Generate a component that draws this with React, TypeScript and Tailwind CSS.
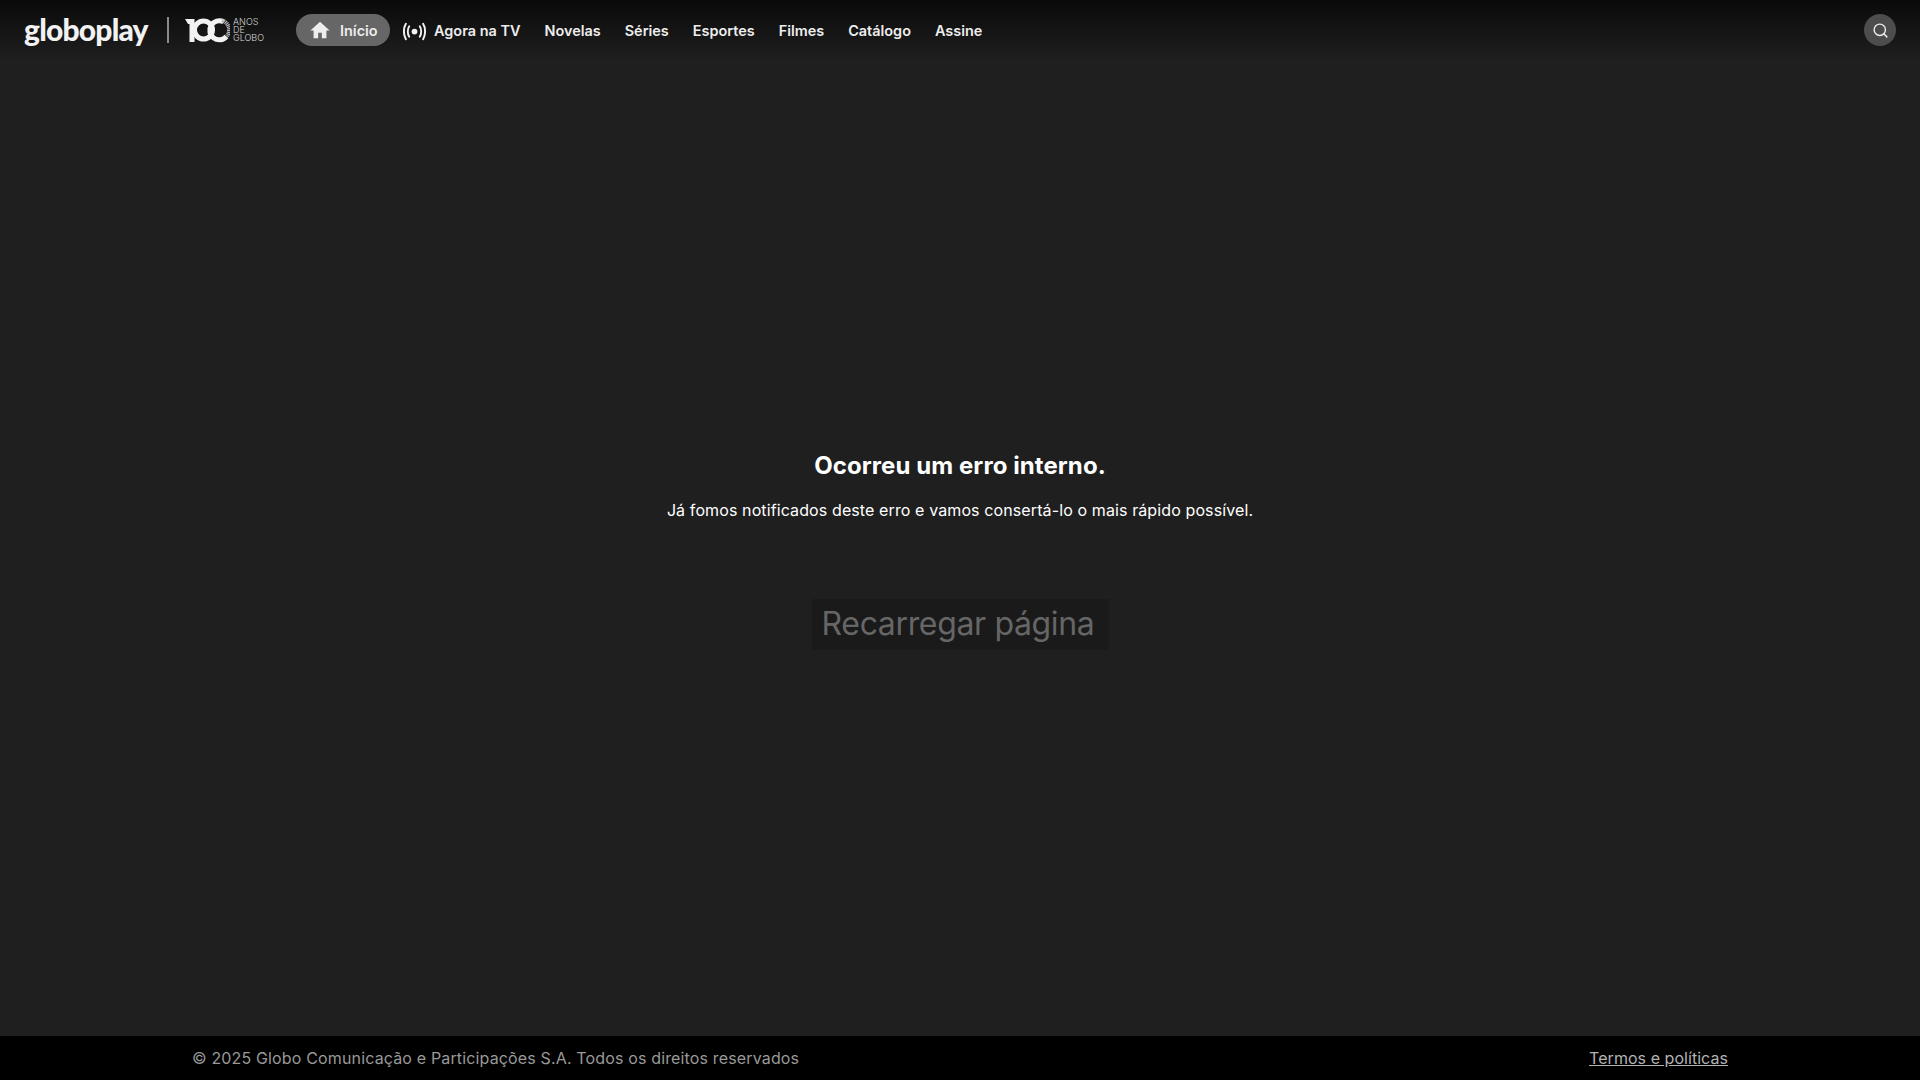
import { Search } from 'lucide-react';

const navItems = ['Novelas', 'Séries', 'Esportes', 'Filmes', 'Catálogo', 'Assine'];

function HundredYears() {
  return (
    <div className="flex items-center">
      <svg width="45" height="26" viewBox="0 0 45 26" fill="none">
        <path d="M0 2 H9.500 V25 H4.500 V7 H3 Z" fill="#f2f2f2" />
        <circle cx="18.500" cy="13" r="9" stroke="#f2f2f2" strokeWidth="5" />
        <path d="M38.500 4.800 A9.500 9.500 0 1 0 41.500 19.500" stroke="#f2f2f2" strokeWidth="5" />
        <path d="M37 3.500 A9.800 9.800 0 0 1 42 19" stroke="#b5b5b5" strokeWidth="4" strokeDasharray="1.200 0.600" />
      </svg>
      <div className="ml-[3px] flex flex-col text-[9px] leading-[8px] font-light text-[#d9d9d9]">
        <span>ANOS</span>
        <span>DE</span>
        <span>GLOBO</span>
      </div>
    </div>
  );
}

function BroadcastIcon() {
  return (
    <svg width="23" height="23" viewBox="0 0 24 24" fill="none" stroke="#f2f2f2" strokeWidth="2" strokeLinecap="round">
      <circle cx="12" cy="12" r="3" fill="#f2f2f2" stroke="none" />
      <path d="M6.500 6.500 C4.500 9.500 4.500 14.500 6.500 17.500" />
      <path d="M17.500 6.500 C19.500 9.500 19.500 14.500 17.500 17.500" />
      <path d="M3 4 C0.300 8.500 0.300 15.500 3 20" />
      <path d="M21 4 C23.700 8.500 23.700 15.500 21 20" />
    </svg>
  );
}

export default function App() {
  return (
    <div className="flex min-h-screen flex-col bg-[#1f1f1f] font-['Inter',sans-serif] text-white">
      {/* Header */}
      <header className="flex h-[60px] items-start bg-gradient-to-b from-[#0a0a0a] to-[#1f1f1f] pt-[14px] pr-6 pl-6">
        <div className="flex h-8 items-center">
          <span className="-mt-[2px] w-[127px] font-['Lato',sans-serif] text-[30px] leading-8 font-black tracking-[-0.8px] text-[#f2f2f2]">
            globoplay
          </span>
          <div className="mr-[16px] ml-[16px] h-[26px] w-[2px] bg-[#8a8a8a]" />
          <HundredYears />
        </div>

        <nav className="ml-[32px] flex h-8 flex-1 items-center pt-[2px] text-[14.450px] font-semibold text-[#ededed]">
          <a className="-mt-[2px] flex h-8 w-[94px] items-center gap-[9px] rounded-full bg-[#666666] pl-[13px]">
            <svg width="22" height="22" viewBox="0 0 24 24" fill="#ededed">
              <path d="M12 3 L1.500 12.500 H5 V21 H10 V15 H14 V21 H19 V12.500 H22.500 Z" />
            </svg>
            <span className="pt-[2px]">Início</span>
          </a>
          <a className="ml-[13px] flex items-center gap-2">
            <BroadcastIcon />
            <span>Agora na TV</span>
          </a>
          <div className="ml-6 flex items-center gap-6">
            {navItems.map(item => (
              <a key={item}>{item}</a>
            ))}
          </div>
        </nav>

        <button className="flex h-8 w-8 items-center justify-center rounded-full bg-[#4d4d4d]">
          <Search size={17} strokeWidth={2} color="#ededed" />
        </button>
      </header>

      {/* Error message */}
      <main className="flex flex-1 flex-col items-center justify-center pt-[4px]">
        <h1 className="text-2xl leading-8 font-bold tracking-[0.08px]">Ocorreu um erro interno.</h1>
        <p className="mt-[16px] text-base leading-6 tracking-[0.11px]">
          Já fomos notificados deste erro e vamos consertá-lo o mais rápido possível.
        </p>
        <button className="mt-[77px] flex h-[51px] w-[297px] items-center justify-center bg-[#1a1a1a] pr-[4px] pb-[2px] text-[32px] tracking-[-0.35px] text-[#666666]">
          Recarregar página
        </button>
      </main>

      {/* Footer */}
      <footer className="flex h-11 items-center justify-between bg-black pr-[192px] pl-[192px] text-base tracking-[0.15px] text-[#999999]">
        <span>© 2025 Globo Comunicação e Participações S.A. Todos os direitos reservados</span>
        <a className="tracking-[0.05px] text-[#b3b3b3] underline">Termos e políticas</a>
      </footer>
    </div>
  );
}
